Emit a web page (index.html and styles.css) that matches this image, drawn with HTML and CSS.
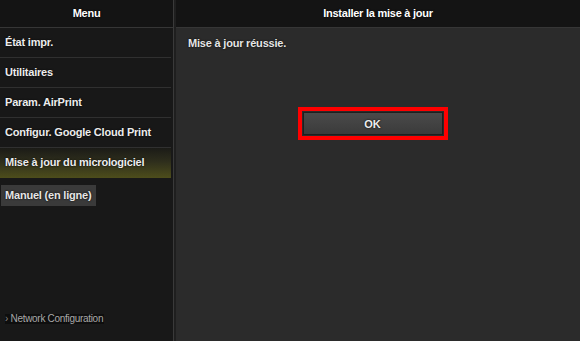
FILE: index.html
```html
<!DOCTYPE html>
<html lang="fr">
<head>
    <meta charset="UTF-8">
    <title>Installer la mise à jour</title>
    <link rel="stylesheet" href="styles.css">
</head>
<body>
    <div class="page">
        <div class="sidebar">
            <div class="panel-head">Menu</div>
            <div class="menu">
                <div class="menu-item">État impr.</div>
                <div class="menu-item">Utilitaires</div>
                <div class="menu-item">Param. AirPrint</div>
                <div class="menu-item">Configur. Google Cloud Print</div>
                <div class="menu-item active">Mise à jour du micrologiciel</div>
            </div>
            <div class="manual-btn">Manuel (en ligne)</div>
            <div class="net-link"><span class="arrow">&#8250;</span> Network Configuration</div>
        </div>
        <div class="main">
            <div class="panel-head">Installer la mise à jour</div>
            <div class="content">
                <p class="message">Mise à jour réussie.</p>
                <div class="btn-row">
                    <div class="focus-box">
                        <button class="ok-btn">OK</button>
                    </div>
                </div>
            </div>
        </div>
    </div>
</body>
</html>
```
FILE: styles.css
```css
body {
    margin: 0;
    background-color: #2b2b2b;
    font-family: "Liberation Sans", Arial, sans-serif;
}

.page {
    display: flex;
    width: 580px;
    height: 341px;
    overflow: hidden;
}

.sidebar {
    width: 173px;
    background-color: #181818;
    border-right: 1px solid #3a3a3a;
    display: flex;
    flex-direction: column;
}

.main {
    flex: 1;
    background-color: #2b2b2b;
    border-left: 2px solid #1f1f1f;
    display: flex;
    flex-direction: column;
}

.panel-head {
    height: 27px;
    line-height: 27px;
    background-color: #141414;
    border-bottom: 1px solid #363636;
    color: #fff;
    font-size: 11px;
    font-weight: bold;
    letter-spacing: -0.25px;
    text-align: center;
    text-shadow: 0 0 2px #000;
}

.menu {
    margin-right: 2px;
}

.menu-item {
    height: 29px;
    line-height: 29px;
    padding-left: 5px;
    border-bottom: 1px solid #303030;
    color: #ececec;
    font-size: 11px;
    font-weight: bold;
    letter-spacing: -0.2px;
    text-shadow: 0 0 2px #000;
}

.menu-item.active {
    border-bottom: none;
    height: 30px;
    background: linear-gradient(to bottom, #1b1b17 0%, #2e2e1c 45%, #4d4d1b 100%);
}

.manual-btn {
    align-self: flex-start;
    margin-top: 7px;
    margin-left: 1px;
    height: 21px;
    line-height: 21px;
    padding: 0 5px 0 4px;
    background-color: #3a3a3a;
    color: #e6e6e6;
    font-size: 11px;
    font-weight: bold;
    letter-spacing: -0.2px;
    text-shadow: 0 0 2px #000;
}

.net-link {
    align-self: flex-start;
    margin-top: auto;
    margin-bottom: 17px;
    margin-left: 5px;
    padding-right: 1px;
    height: 10px;
    line-height: 10px;
    background-color: #0e0e0e;
    color: #a8a8a8;
    font-size: 10px;
    letter-spacing: -0.3px;
}

.net-link .arrow {
    color: #888;
}

.content {
    padding: 0 12px;
}

.message {
    margin: 9px 0 0;
    color: #e6e6e6;
    font-size: 11px;
    font-weight: bold;
    letter-spacing: -0.2px;
    text-shadow: 0 0 2px #000;
}

.btn-row {
    display: flex;
    justify-content: center;
    padding-right: 11px;
    margin-top: 58px;
}

.focus-box {
    border: 4px solid #ff0000;
    padding: 1px;
    width: 140px;
    height: 23px;
}

.ok-btn {
    width: 100%;
    height: 100%;
    border: 1px solid #1e1e1e;
    background: linear-gradient(to bottom, #4a4a4a, #3b3b3b);
    color: #eee;
    font-family: "Liberation Sans", Arial, sans-serif;
    font-size: 11px;
    font-weight: bold;
    text-shadow: 0 0 2px #000;
    padding: 0;
}
```
